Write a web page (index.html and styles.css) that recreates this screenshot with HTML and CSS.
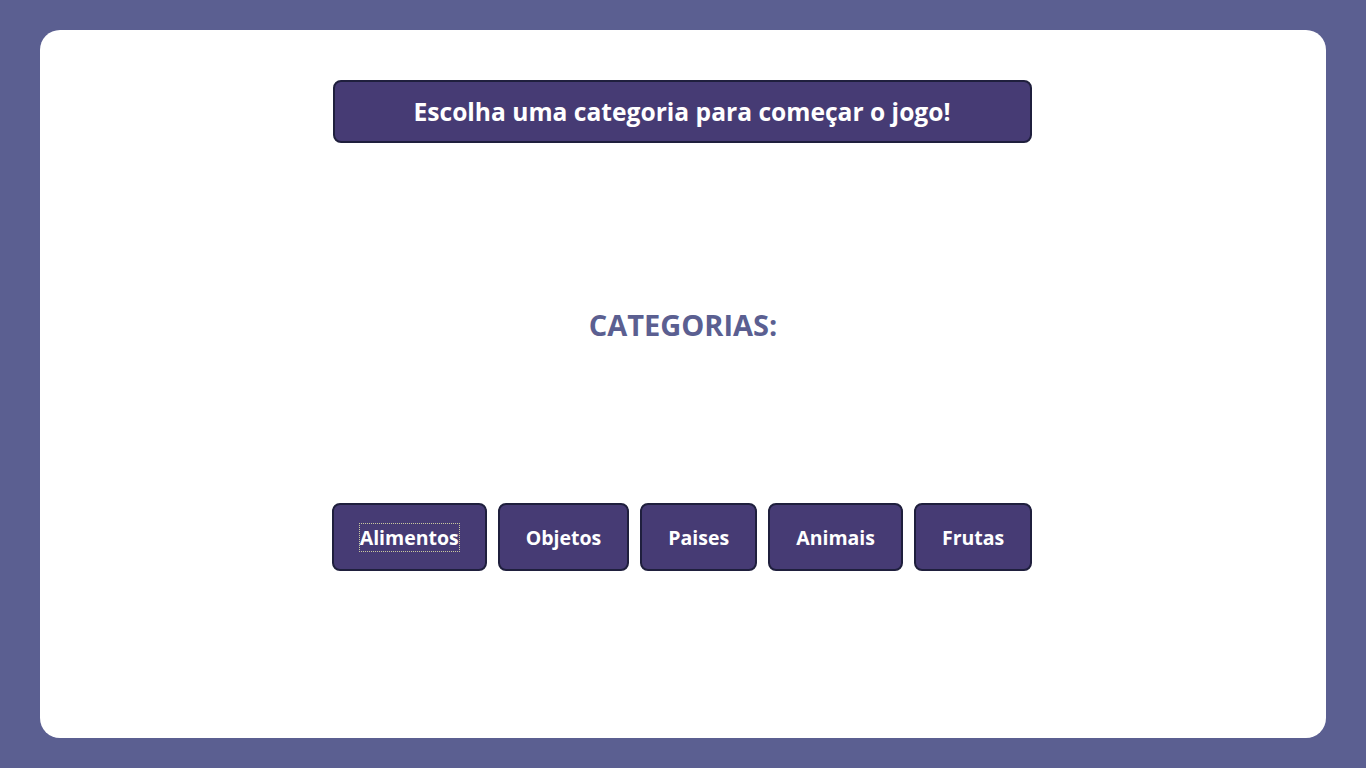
FILE: index.html
```html
<!DOCTYPE html>
<html lang="pt">
<head>
<meta charset="utf-8">
<title>Jogo da Forca</title>
<link rel="stylesheet" href="styles.css">
</head>
<body>
<main class="card">
  <div class="banner">Escolha uma categoria para começar o jogo!</div>
  <h2 class="heading">CATEGORIAS:</h2>
  <div class="categories">
    <button class="cat"><span class="focus">Alimentos</span></button>
    <button class="cat">Objetos</button>
    <button class="cat">Paises</button>
    <button class="cat">Animais</button>
    <button class="cat">Frutas</button>
  </div>
</main>
</body>
</html>
```
FILE: styles.css
```css
html, body {
  margin: 0;
  padding: 0;
  height: 100%;
}
body {
  background: #5b5f91;
  font-family: "Open Sans", "Noto Sans", sans-serif;
  padding: 30px 40px;
  box-sizing: border-box;
}
.card {
  background: #ffffff;
  border-radius: 20px;
  height: 708px;
  box-sizing: border-box;
  padding-top: 50px;
  display: flex;
  flex-direction: column;
  align-items: center;
}
.banner {
  width: 699px;
  height: 63px;
  margin-right: 2px;
  box-sizing: border-box;
  background: #463b74;
  border: 2px solid #1f1f3d;
  border-radius: 8px;
  color: #ffffff;
  font-weight: 700;
  font-size: 24.6px;
  display: flex;
  align-items: center;
  justify-content: center;
}
.heading {
  margin: 165px 0 0;
  font-size: 29px;
  line-height: 34px;
  color: #5b5f91;
  font-weight: 700;
}
.categories {
  margin-top: 161px;
  margin-right: 2px;
  display: flex;
  justify-content: center;
  gap: 11px;
}
.cat {
  height: 68px;
  padding: 0 26px;
  background: #463b74;
  border: 2px solid #1f1f3d;
  border-radius: 8px;
  color: #ffffff;
  font-family: inherit;
  font-weight: 700;
  font-size: 19.5px;
  cursor: pointer;
}
.focus {
  outline: 1px dotted #c9c9a0;
  outline-offset: 0;
}
```
